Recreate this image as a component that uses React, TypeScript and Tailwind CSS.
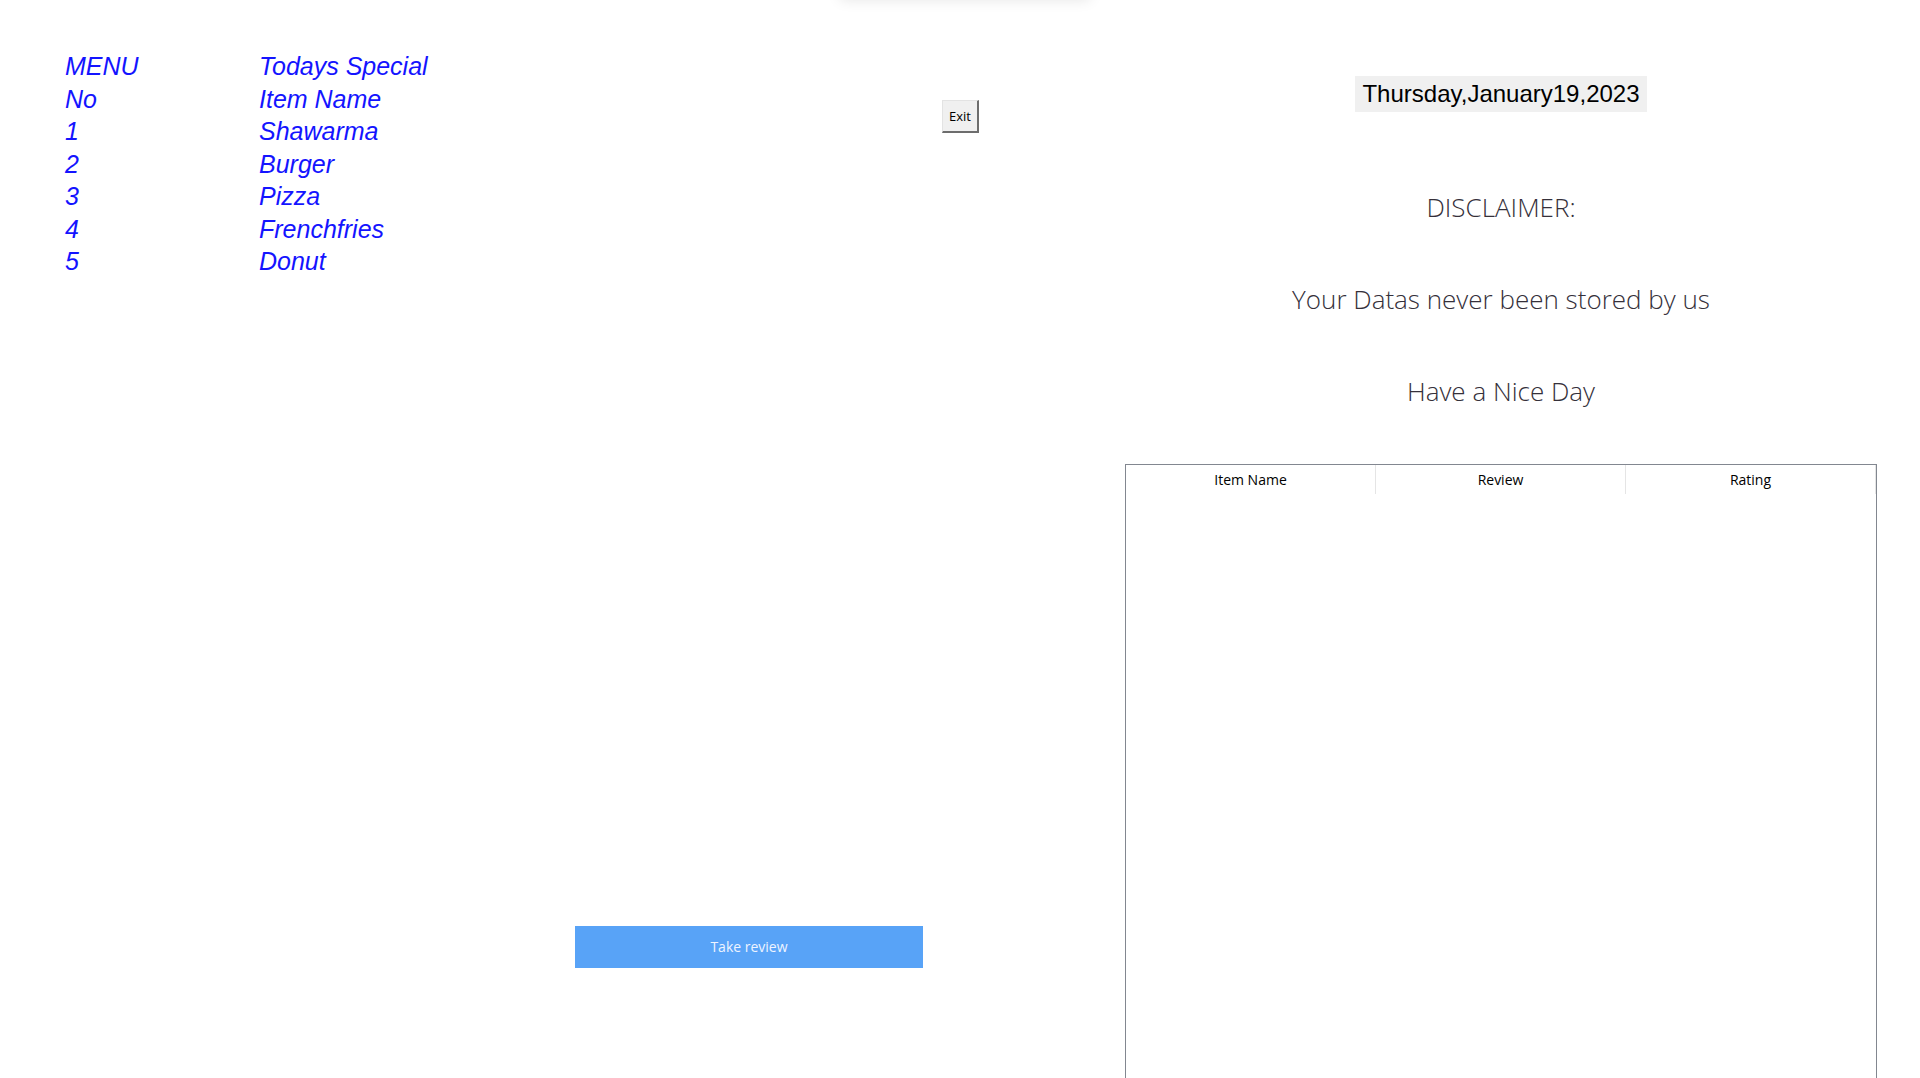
const menuRows: [string, string][] = [
  ["MENU", "Todays Special"],
  ["No", "Item Name"],
  ["1", "Shawarma"],
  ["2", "Burger"],
  ["3", "Pizza"],
  ["4", "Frenchfries"],
  ["5", "Donut"],
];

const columns = ["Item Name", "Review", "Rating"];

export default function App() {
  return (
    <div className="relative flex h-[1078px] w-[1920px] overflow-hidden bg-white">
      {/* faint window shadow at the top edge */}
      <div className="pointer-events-none absolute left-[840px] top-[-24px] h-[24px] w-[250px] shadow-[0_0_14px_rgba(0,0,0,0.10)]" />

      <div className="flex w-[1125px] shrink-0 flex-col pl-[65px] pt-[50px]">
        <div className="flex">
          <div className="grid w-[877px] grid-cols-[194px_1fr] font-['Liberation_Sans',Arial,sans-serif] text-[25px] italic leading-[32.5px] text-[#1414ff]">
            {menuRows.map(([no, name]) => (
              <div key={no} className="contents">
                <span>{no}</span>
                <span>{name}</span>
              </div>
            ))}
          </div>
          <button className="mt-[50px] h-[33px] w-[37px] border border-[#e3e3e3] border-b-2 border-r-2 border-b-[#6d6d6d] border-r-[#6d6d6d] bg-[#f0f0f0] font-['Open_Sans',sans-serif] text-[13px] leading-none text-black">
            Exit
          </button>
        </div>
        <button className="ml-[510px] mt-[648px] h-[42px] w-[348px] bg-[#58a3f7] font-['Open_Sans',sans-serif] text-[14px] text-[#eef4ff]">
          Take review
        </button>
      </div>

      <div className="flex w-[752px] shrink-0 flex-col items-center pt-[76px] font-['Open_Sans',sans-serif] text-[#35303a]">
        <div className="h-[36px] bg-[#f0f0f0] px-[7px] font-['Liberation_Sans',Arial,sans-serif] text-[24px] leading-[36px] text-black">
          Thursday,January19,2023
        </div>
        <p className="mt-[75px] text-[26px] font-light leading-[40px]">DISCLAIMER:</p>
        <p className="mt-[52px] text-[26px] font-light leading-[40px]">Your Datas never been stored by us</p>
        <p className="mt-[52px] text-[26px] font-light leading-[40px]">Have a Nice Day</p>

        <div className="mt-[53px] h-[640px] w-[752px] shrink-0 border border-[#828790] bg-white">
          <div className="grid h-[29px] grid-cols-3">
            {columns.map((c) => (
              <div
                key={c}
                className="flex items-center justify-center border-r border-[#e5e5e5] text-[14px] text-black"
              >
                {c}
              </div>
            ))}
          </div>
        </div>
      </div>
    </div>
  );
}
